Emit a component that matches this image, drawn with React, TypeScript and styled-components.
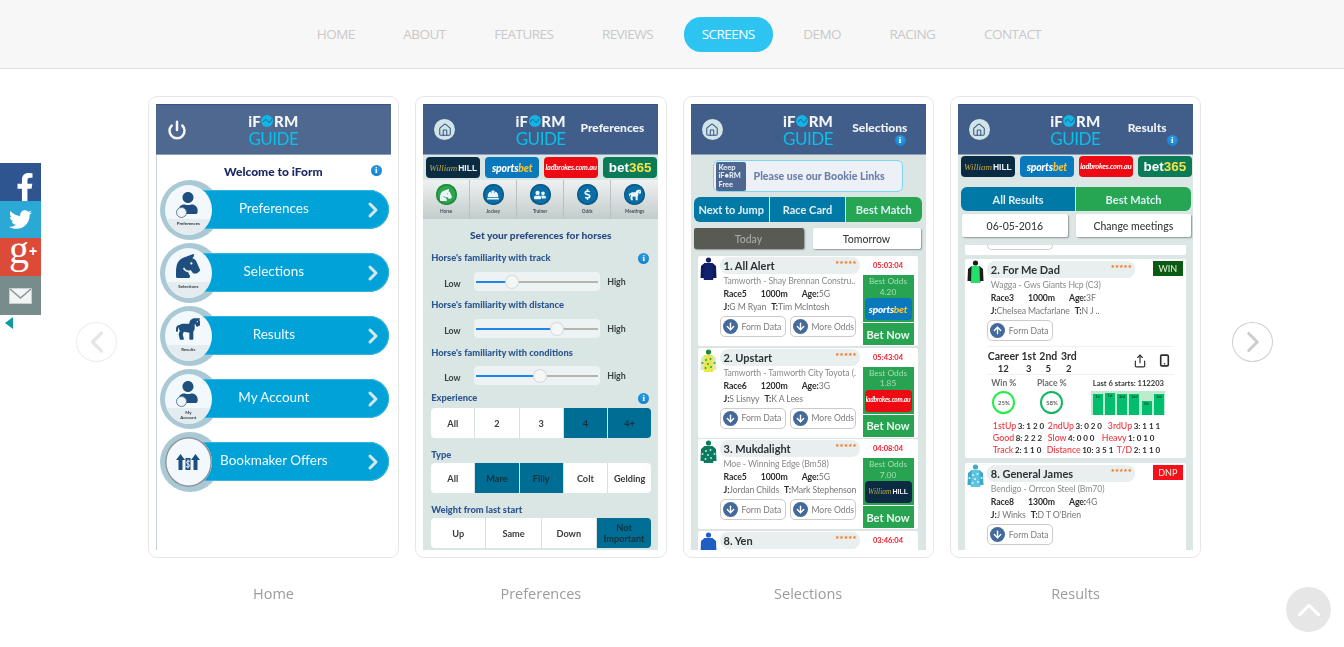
import React from 'react';
import styled, { createGlobalStyle } from 'styled-components';
import { ArrowDown, ArrowUp, ChevronLeft, ChevronRight, ChevronUp, House, Power, Share, Smartphone } from 'lucide-react';
import { FaDollarSign, FaFacebookF, FaHardHat, FaHorse, FaHorseHead, FaTwitter, FaUser, FaUserFriends } from 'react-icons/fa';

const GlobalStyle = createGlobalStyle`
  * { box-sizing: border-box; }
  html, body { margin: 0; padding: 0; background: #fff; overflow: hidden; }
  body { font-family: "Open Sans", "Liberation Sans", sans-serif; }
`;

const Page = styled.div`
  width: 1344px;
  height: 647px;
  overflow: hidden;
`;

/* top navigation */
const NavBar = styled.nav`
  height: 69px;
  background: #f7f7f7;
  border-bottom: 1px solid #e0e0e0;
  display: flex;
  justify-content: center;
  align-items: center;
  gap: 12.6px;
  padding: 1px 0 0 14px;
`;
const NavLink = styled.a<{ $active?: boolean }>`
  height: 35px;
  padding: 0 18px 1px;
  display: flex;
  align-items: center;
  border-radius: 17px;
  font-size: 13.5px;
  letter-spacing: -0.55px;
  color: ${p => (p.$active ? '#fff' : '#c9c9c9')};
  background: ${p => (p.$active ? '#2dc4f2' : 'transparent')};
`;

/* floating side rail */
const Rail = styled.aside`
  position: fixed;
  left: 0;
  top: 163px;
  width: 41px;
  display: flex;
  flex-direction: column;
`;
const RailItem = styled.div<{ $bg: string; $h: number }>`
  height: ${p => p.$h}px;
  background: ${p => p.$bg};
  color: #fff;
  display: flex;
  align-items: center;
  justify-content: center;
`;
const GooglePlus = styled.span`
  font-family: "Liberation Serif", serif;
  color: #fff;
  font-size: 40px;
  line-height: 30px;
  margin-top: -13px;
  margin-left: 5px;
  & small { font-family: "Liberation Sans", sans-serif; font-size: 14px; font-weight: 700; vertical-align: 7px; }
`;
const RailToggle = styled.div`
  margin: 2px 0 0 5px;
  width: 0;
  height: 0;
  border-top: 6px solid transparent;
  border-bottom: 6px solid transparent;
  border-right: 8px solid #0b9c9c;
`;

/* carousel */
const Stage = styled.main`
  position: relative;
  display: flex;
  justify-content: center;
  padding: 27px 0 0 5px;
`;
const Slide = styled.figure`
  flex: 0 0 267.33px;
  margin: 0;
  padding: 0 8px;
`;
const Frame = styled.div`
  height: 462px;
  border: 1px solid #e6e6e6;
  border-radius: 9px;
  padding: 7px;
  background: #fff;
`;
const Caption = styled.figcaption`
  margin-top: 25px;
  text-align: center;
  font-size: 14.5px;
  line-height: 22px;
  color: #9c9c9c;
`;
const ArrowButton = styled.button<{ $side: 'left' | 'right'; $faint?: boolean }>`
  position: absolute;
  top: 253px;
  ${p => (p.$side === 'left' ? 'left: 76px;' : 'right: 71px;')}
  width: 41px;
  height: 40px;
  border-radius: 50%;
  background: #fff;
  padding: 0;
  border: 1px solid ${p => (p.$faint ? '#ececec' : '#cfcfcf')};
  color: ${p => (p.$faint ? '#e6e6e6' : '#cdcdcd')};
  display: flex;
  align-items: center;
  justify-content: center;
`;
const TopButton = styled.button`
  position: fixed;
  left: 1286px;
  top: 587px;
  width: 45px;
  height: 45px;
  border: 0;
  border-radius: 50%;
  background: #e6e6e6;
  color: #fff;
  display: flex;
  align-items: center;
  justify-content: center;
  padding: 0;
`;

/* phone screens */
const Screen = styled.div<{ $bg: string; $rule?: boolean }>`
  width: 235px;
  height: 446px;
  overflow: hidden;
  display: flex;
  flex-direction: column;
  background: ${p => p.$bg};
  font-family: Lato, "Liberation Sans", sans-serif;
  filter: blur(0.3px);
  ${p => p.$rule && 'box-shadow: inset 1px 0 0 #c9d2d6;'}
`;
const Header = styled.header<{ $light?: boolean }>`
  flex: 0 0 51px;
  display: grid;
  grid-template-columns: 1fr auto 1fr;
  background: ${p => (p.$light ? '#4f6890' : '#415d89')};
  border-top: 1px solid #3a5480;
  border-bottom: 1px solid #8ea0b8;
  color: #fff;
`;
const HeaderLeft = styled.div`
  display: flex;
  align-items: center;
  padding-left: 11px;
`;
const HomeBadge = styled.span`
  width: 21px;
  height: 21px;
  border-radius: 50%;
  background: #d3e4e6;
  color: #35558a;
  display: flex;
  align-items: center;
  justify-content: center;
`;
const Logo = styled.div`
  width: 52px;
  display: flex;
  flex-direction: column;
  align-items: center;
  padding-top: 8px;
`;
const LogoTop = styled.div`
  display: flex;
  align-items: center;
  font-weight: 900;
  font-size: 15px;
  line-height: 16px;
  letter-spacing: 0.2px;
  color: #f2f6f8;
`;
const LogoDot = styled.span`
  width: 12px;
  height: 12px;
  border-radius: 50%;
  background: #14b5e4;
  margin: 0 0.5px;
  display: inline-flex;
  align-items: center;
  justify-content: center;
`;
const LogoBottom = styled.div`
  font-weight: 400;
  font-size: 17px;
  line-height: 20px;
  color: #08c0ea;
  letter-spacing: -0.5px;
`;
const HeaderTitle = styled.div`
  display: flex;
  flex-direction: column;
  align-items: center;
  padding-top: 15px;
  font-size: 12px;
  line-height: 15px;
  font-weight: 900;
  color: #eef2f6;
`;
const TitleInfo = styled.div<{ $pull: number }>`
  align-self: flex-end;
  margin: 0 ${p => p.$pull}px 0 0;
  line-height: 0;
`;
const InfoDot = styled.span`
  display: inline-flex;
  align-items: center;
  justify-content: center;
  width: 11px;
  height: 11px;
  border-radius: 50%;
  background: radial-gradient(circle at 50% 35%, #2ea0e6, #0f78c2);
  color: #fff;
  font-family: "Liberation Serif", serif;
  font-weight: 700;
  font-size: 9px;
  line-height: 11px;
`;

/* home screen */
const WelcomeRow = styled.div`
  position: relative;
  height: 24px;
  margin: 4px 0 -5px;
  flex: none;
  display: flex;
  align-items: center;
  justify-content: center;
  font-weight: 900;
  font-size: 12px;
  color: #1b2b63;
`;
const WelcomeInfo = styled.span`
  position: absolute;
  right: 9px;
  top: 6px;
  line-height: 0;
`;
const MenuRow = styled.div`
  flex: none;
  height: 63px;
  display: flex;
  align-items: center;
  padding-left: 4px;
`;
const Ring = styled.div`
  flex: none;
  width: 60px;
  height: 60px;
  border-radius: 50%;
  background: #a9c9d5;
  display: flex;
  align-items: center;
  padding-left: 5px;
`;
const Face = styled.div<{ $plain?: boolean }>`
  position: relative;
  z-index: 2;
  width: 47px;
  height: 50px;
  border-radius: 50%;
  background: #f2f8fb;
  overflow: hidden;
  display: flex;
  flex-direction: column;
  ${p => p.$plain && 'box-shadow: inset 0 0 0 1.5px #8a9498;'}
`;
const FaceArt = styled.div<{ $full?: boolean }>`
  flex: 1;
  position: relative;
  display: flex;
  align-items: center;
  justify-content: center;
  color: #1f4f7f;
  padding-top: ${p => (p.$full ? 0 : 3)}px;
`;
const FaceLabel = styled.div`
  flex: 0 0 16px;
  background: #e5ecef;
  text-align: center;
  font-size: 4.4px;
  line-height: 5px;
  font-weight: 700;
  color: #2c3a44;
  padding-top: 2px;
`;
const SmallBadge = styled.span`
  position: absolute;
  left: 11px;
  bottom: 1px;
  width: 11px;
  height: 11px;
  border: 1px solid #5d7f99;
  border-radius: 50%;
  background: #eef6f8;
`;
const Pill = styled.div`
  position: relative;
  z-index: 1;
  margin-left: -20px;
  flex: 0 0 189px;
  height: 39px;
  background: #00a2d8;
  border-radius: 0 20px 20px 0;
  box-shadow: inset 0 0 0 1px #35b4de;
  display: flex;
  align-items: center;
  color: #f2fbff;
  font-size: 13.5px;
`;
const PillLabel = styled.span`
  width: 148px;
  text-align: center;
  padding-bottom: 3px;
`;
const PillChevron = styled.span`
  margin-left: 13px;
  line-height: 0;
  color: #d6e7ee;
`;

/* bookmaker strip */
const BrandStrip = styled.div<{ $top?: number }>`
  flex: 0 0 25px;
  display: grid;
  grid-template-columns: repeat(4, 54px);
  gap: 5px;
  padding: ${p => p.$top ?? 2}px 3px 0;
  height: 25px;
`;
const Chip = styled.div<{ $bg: string; $h?: number }>`
  height: ${p => p.$h ?? 21}px;
  border-radius: 4px;
  background: ${p => p.$bg};
  display: flex;
  align-items: center;
  justify-content: center;
  white-space: nowrap;
  color: #fff;
`;
const Script = styled.span<{ $s: number }>`
  font-family: "Liberation Serif", serif;
  font-style: italic;
  font-size: ${p => p.$s}px;
  color: #c2a94e;
`;
const Hill = styled.span<{ $s: number }>`
  font-family: "Liberation Sans", sans-serif;
  font-weight: 700;
  font-size: ${p => p.$s}px;
  color: #eef2f4;
  margin-left: 1px;
`;
const Sports = styled.span<{ $s: number }>`
  font-weight: 900;
  font-style: italic;
  font-size: ${p => p.$s}px;
  letter-spacing: -0.2px;
  & b { color: #f7c331; font-weight: 900; }
`;
const Lad = styled.span<{ $s: number }>`
  font-style: italic;
  font-weight: 700;
  font-size: ${p => p.$s}px;
  letter-spacing: -0.2px;
`;
const Bet365 = styled.span`
  font-family: "Liberation Sans", sans-serif;
  font-weight: 700;
  font-size: 13.5px;
  & b { color: #f6e34b; }
`;

function Brand({ kind, small }: { kind: string; small?: boolean }) {
  const h = small ? 22 : 21;
  if (kind === 'hill') return <Chip $bg="#0b2b42" $h={h}><Script $s={small ? 7.5 : 9}>William</Script><Hill $s={small ? 7 : 8.5}>HILL</Hill></Chip>;
  if (kind === 'sports') return <Chip $bg="#0a78bd" $h={h}><Sports $s={small ? 10 : 10.5}>sports<b>bet</b></Sports></Chip>;
  if (kind === 'lad') return <Chip $bg="#ee0a12" $h={h}><Lad $s={small ? 6.5 : 7.4}>ladbrokes.com.au</Lad></Chip>;
  return <Chip $bg="#0b7a57" $h={h}><Bet365>bet<b>365</b></Bet365></Chip>;
}
const AllBrands = ({ top }: { top?: number }) => (
  <BrandStrip $top={top}>
    <Brand kind="hill" />
    <Brand kind="sports" />
    <Brand kind="lad" />
    <Brand kind="bet" />
  </BrandStrip>
);

/* preferences */
const IconTabs = styled.div`
  flex: 0 0 39px;
  display: grid;
  grid-template-columns: repeat(5, 1fr);
  background: linear-gradient(#eef1f1, #c3cccc);
`;
const IconTab = styled.div`
  display: flex;
  flex-direction: column;
  align-items: center;
  padding-top: 4px;
  border-right: 1px solid #b8c2c2;
  font-size: 4.6px;
  line-height: 6px;
  font-weight: 700;
  color: #45515a;
  &:last-child { border-right: 0; }
`;
const TabDisc = styled.span<{ $green?: boolean }>`
  width: 21px;
  height: 21px;
  border-radius: 50%;
  background: ${p => (p.$green ? '#2ea44f' : '#0b6da6')};
  box-shadow: inset 0 0 0 1.5px ${p => (p.$green ? '#1d8a3c' : '#0a5a8a')};
  color: #eaf6fa;
  display: flex;
  align-items: center;
  justify-content: center;
  margin-bottom: 3px;
`;
const Pane = styled.div`
  flex: 1;
  padding: 0 8px;
  position: relative;
`;
const PaneTitle = styled.div`
  height: 18px;
  margin: 7px 0 1px;
  line-height: 18px;
  text-align: center;
  font-weight: 900;
  font-size: 10.2px;
  color: #2b4a80;
`;
const FieldLabel = styled.div<{ $mt: number }>`
  height: 14px;
  line-height: 14px;
  margin-top: ${p => p.$mt}px;
  font-weight: 900;
  font-size: 9.3px;
  color: #2d5690;
  display: flex;
  justify-content: space-between;
  align-items: center;
  padding-right: 1px;
  & > span { line-height: 0; }
`;
const SliderRow = styled.div<{ $mt: number }>`
  margin-top: ${p => p.$mt}px;
  height: 19px;
  display: grid;
  grid-template-columns: 43px 126px auto;
  align-items: center;
  font-weight: 700;
  font-size: 8.8px;
  color: #3a3f42;
`;
const SliderLow = styled.span`
  padding-left: 13px;
  padding-top: 3px;
`;
const SliderHigh = styled.span`
  padding-left: 7px;
`;
const SliderBox = styled.div`
  position: relative;
  height: 19px;
  background: #edf2f4;
  border-radius: 4px;
`;
const SliderLine = styled.div`
  position: absolute;
  left: 2px;
  right: 2px;
  top: 9px;
  height: 1.5px;
  background: #b7b4ae;
`;
const SliderFill = styled.div`
  position: absolute;
  left: 0;
  top: 0;
  height: 100%;
  background: #1e86ea;
`;
const SliderThumb = styled.div`
  position: absolute;
  top: 4px;
  width: 12px;
  height: 12px;
  margin-left: -6px;
  border-radius: 50%;
  background: #f5f7f7;
  box-shadow: 0 0 0 1px #d5dbdb;
`;
const Segments = styled.div<{ $n: number; $mt: number }>`
  margin-top: ${p => p.$mt}px;
  height: 30px;
  width: 220px;
  display: grid;
  grid-template-columns: repeat(${p => p.$n}, 1fr);
  gap: 1px;
  border-radius: 4px;
  overflow: hidden;
  background: #d6e2e2;
`;
const Segment = styled.div<{ $on?: boolean }>`
  display: flex;
  align-items: center;
  justify-content: center;
  text-align: center;
  background: ${p => (p.$on ? '#006d95' : '#fff')};
  color: ${p => (p.$on ? '#17303a' : '#3b3b3b')};
  font-weight: 700;
  font-size: 9.2px;
  line-height: 11px;
`;

/* selections & results */
const Banner = styled.div`
  margin: 5px 0 0 22px;
  width: 190px;
  height: 32px;
  flex: none;
  border: 1px solid #7fd6ef;
  border-radius: 6px;
  background: #eef0f8;
  display: flex;
  align-items: center;
  padding-left: 2px;
  gap: 8px;
  font-weight: 900;
  font-size: 10.6px;
  color: #6c80a8;
  white-space: nowrap;
`;
const KeepBox = styled.div`
  width: 30px;
  height: 29px;
  background: #4e6790;
  border-radius: 2px;
  color: #e4ecf4;
  font-size: 7.4px;
  line-height: 8.5px;
  font-weight: 900;
  padding: 2px 0 0 3px;
`;
const TabBar = styled.div<{ $n: number; $mt: number; $w: number; $ml: number; $h: number }>`
  flex: none;
  margin: ${p => p.$mt}px 0 0 ${p => p.$ml}px;
  width: ${p => p.$w}px;
  height: ${p => p.$h}px;
  border-radius: 6px;
  overflow: hidden;
  display: grid;
  grid-template-columns: repeat(${p => p.$n}, 1fr);
  gap: 1px;
  background: #dbe6e4;
`;
const TabCell = styled.div<{ $green?: boolean }>`
  display: flex;
  align-items: center;
  justify-content: center;
  font-size: 11px;
  font-weight: 700;
  color: #dff0f6;
  background: ${p => (p.$green ? '#26a553' : '#0079a6')};
`;
const DayRow = styled.div<{ $cols: string; $gap: number; $mt: number; $ml: number; $h: number }>`
  flex: none;
  margin: ${p => p.$mt}px 0 0 ${p => p.$ml}px;
  height: ${p => p.$h}px;
  display: grid;
  grid-template-columns: ${p => p.$cols};
  gap: ${p => p.$gap}px;
`;
const DayBtn = styled.div<{ $dark?: boolean }>`
  display: flex;
  align-items: center;
  justify-content: center;
  font-size: 10.5px;
  font-weight: 500;
  background: ${p => (p.$dark ? '#5a5a54' : '#fff')};
  color: ${p => (p.$dark ? '#a8aba8' : '#3a3a3a')};
  border-radius: 2px;
  box-shadow: 1px 1px 1.5px #8e9696;
`;
const RaceCard = styled.article<{ $h: number; $mt: number; $ml: number; $w: number }>`
  flex: none;
  margin: ${p => p.$mt}px 0 0 ${p => p.$ml}px;
  width: ${p => p.$w}px;
  height: ${p => p.$h}px;
  background: #fff;
  border-radius: 2px;
  overflow: hidden;
`;
const RaceTop = styled.div`
  display: flex;
`;
const SilkCol = styled.div`
  flex: 0 0 22px;
  padding: 1px 0 0 2px;
  line-height: 0;
`;
const RaceMain = styled.div<{ $w: number; $top?: number }>`
  flex: 0 0 ${p => p.$w}px;
  padding-top: ${p => p.$top ?? 1}px;
  min-width: 0;
`;
const NamePill = styled.div`
  height: 17px;
  background: #e9eeee;
  border-radius: 8px;
  display: flex;
  justify-content: space-between;
  padding: 0 3px 0 4px;
  font-weight: 700;
  font-size: 11px;
  line-height: 18px;
  color: #2c3136;
  white-space: nowrap;
`;
const Stars = styled.span`
  font-family: "DejaVu Sans", sans-serif;
  font-size: 5px;
  line-height: 11px;
  color: #f47a1c;
  letter-spacing: -0.2px;
`;
const Line = styled.div<{ $dim?: boolean; $gap?: number }>`
  height: 13px;
  padding-left: 4px;
  display: flex;
  gap: ${p => p.$gap ?? 5}px;
  font-size: 8.7px;
  letter-spacing: -0.1px;
  line-height: 13px;
  color: ${p => (p.$dim ? '#8a8a8a' : '#777')};
  white-space: nowrap;
  & b { color: #2c2c2c; font-weight: 700; }
`;
const ActionRow = styled.div`
  margin-top: 3px;
  display: flex;
  gap: 4px;
`;
const ActionBtn = styled.div`
  width: 66px;
  height: 21px;
  border: 1px solid #cfcac5;
  border-radius: 5px;
  background: #fff;
  display: flex;
  align-items: center;
  gap: 4px;
  padding-left: 2px;
  font-size: 8.6px;
  color: #7c7c7c;
  white-space: nowrap;
`;
const ArrowDisc = styled.span`
  flex: none;
  width: 15px;
  height: 15px;
  border-radius: 50%;
  background: #446a9c;
  color: #fff;
  display: flex;
  align-items: center;
  justify-content: center;
`;
const RaceSide = styled.div`
  flex: 0 0 51px;
  margin-left: 3px;
`;
const Clock = styled.div`
  height: 19px;
  line-height: 19px;
  text-align: center;
  font-size: 7.5px;
  font-weight: 700;
  color: #f01d2a;
`;
const OddsBox = styled.div`
  height: 47px;
  background: #28a352;
  padding: 0 2px;
  text-align: center;
  font-size: 8.4px;
  line-height: 10.5px;
  color: #a9dcb9;
  & > div:first-child { height: 23px; padding-top: 1px; }
`;
const BetNow = styled.div`
  margin-top: 1px;
  height: 22px;
  background: #28a352;
  color: #eaf8ee;
  font-size: 11px;
  font-weight: 700;
  display: flex;
  align-items: center;
  justify-content: center;
`;
const ClippedCard = styled.div`
  flex: none;
  margin: 8px 0 0 7px;
  width: 221px;
  height: 10px;
  background: #fff;
  border-radius: 0 0 2px 2px;
  padding-left: 22px;
`;
const ClippedBtn = styled.div`
  width: 66px;
  height: 5px;
  border: 1px solid #cfcac5;
  border-top: 0;
  border-radius: 0 0 5px 5px;
`;
const StatusBadge = styled.div<{ $bg: string }>`
  margin: 2px 0 0 18px;
  width: 30px;
  height: 15px;
  background: ${p => p.$bg};
  color: #dcead8;
  font-size: 9px;
  font-weight: 500;
  display: flex;
  align-items: center;
  justify-content: center;
`;
const CareerRow = styled.div`
  margin: 5px 12px 0 22px;
  height: 29px;
  border-top: 1px solid #eff2f2;
  border-bottom: 1px solid #eff2f2;
  display: flex;
  justify-content: space-between;
  align-items: flex-start;
  padding-top: 3px;
`;
const CareerGrid = styled.div`
  display: grid;
  grid-template-columns: 33px 18px 21px 20px;
  text-align: center;
  font-size: 10.5px;
  line-height: 12.5px;
  font-weight: 700;
  color: #2e2e2e;
  white-space: nowrap;
  & b { font-weight: 700; font-size: 9.5px; }
`;
const CareerIcons = styled.div`
  display: flex;
  gap: 11px;
  padding: 4px 0 0 0;
  color: #2c2c2c;
  margin-right: 3px;
`;
const StatGrid = styled.div`
  margin: 3px 0 0 15px;
  display: grid;
  grid-template-columns: 48px 48px 74px;
  font-size: 8.6px;
  line-height: 11px;
  font-weight: 700;
  color: #6d6d6d;
`;
const StatCol = styled.div<{ $push?: number }>`
  display: flex;
  flex-direction: column;
  align-items: center;
  margin-left: ${p => p.$push ?? 0}px;
  white-space: nowrap;
`;
const LastSix = styled.span`
  font-size: 7.6px;
  color: #3a3a3a;
`;
const Gauge = styled.div<{ $c: string }>`
  margin-top: 2px;
  width: 23px;
  height: 23px;
  border-radius: 50%;
  border: 2px solid ${p => p.$c};
  display: flex;
  align-items: center;
  justify-content: center;
  font-size: 6px;
  font-weight: 500;
  color: #444;
`;
const BarBox = styled.div`
  margin-top: 2px;
  width: 74px;
  height: 24px;
  background: #bdeccd;
  display: flex;
  align-items: flex-end;
  justify-content: center;
  gap: 2.2px;
`;
const FormBar = styled.div`
  width: 10px;
  background: #00be6e;
  font-size: 3.4px;
  line-height: 6px;
  text-align: center;
  color: #0a4a2a;
`;
const Records = styled.div`
  margin: 5px 0 0 28px;
`;
const RecordLine = styled.div<{ $cols: string }>`
  display: grid;
  grid-template-columns: ${p => p.$cols};
  height: 12px;
  line-height: 12px;
  font-size: 8px;
  white-space: nowrap;
  color: #2e2e2e;
  font-weight: 700;
  & i { color: #f0343f; font-style: normal; font-weight: 500; font-size: 8.8px; margin-right: 1.5px; }
`;

/* small drawings */
function Silk({ body, sleeve, cap, dots }: { body: string; sleeve: string; cap: string; dots?: string }) {
  return (
    <svg width="17" height="24" viewBox="0 0 17 24">
      <circle cx="8.5" cy="3" r="2.6" fill={cap} />
      <path d="M4.5 6 L12.5 6 L16 9 L16.5 21 L13.5 21 L13 23 L4 23 L3.5 21 L.5 21 L1 9 Z" fill={sleeve} />
      <path d="M4.5 6 L12.5 6 L13 23 L4 23 Z" fill={body} />
      {dots && (
        <g fill={dots}>
          <circle cx="6" cy="11" r="1" /><circle cx="10.5" cy="10" r="1" /><circle cx="8" cy="15" r="1" />
          <circle cx="5.5" cy="19" r="1" /><circle cx="11" cy="18" r="1" /><circle cx="2.5" cy="14" r="1" /><circle cx="14.5" cy="14" r="1" />
        </g>
      )}
    </svg>
  );
}
const OffersIcon = () => (
  <svg width="24" height="18" viewBox="0 0 24 18" fill="currentColor">
    <path d="M4.5 1 L9 7 H6.5 V17 H2.5 V7 H0 Z" />
    <path d="M19.5 1 L24 7 H21.5 V17 H17.5 V7 H15 Z" />
    <path d="M9.5 5 H14.5 V17 H9.5 Z" />
    <path d="M12 6.5 V15.5 M14 8.5 C13 7.5 10.6 7.5 10.6 9.4 C10.6 11.4 13.6 10.6 13.6 12.6 C13.6 14.4 11 14.4 10 13.4" fill="none" stroke="#f2f8fb" strokeWidth="1" />
  </svg>
);
const LogoMark = () => (
  <LogoDot>
    <svg width="9" height="6" viewBox="0 0 9 6"><path d="M0 4 C2 1 3 1 4.5 3 S7 5 9 1" fill="none" stroke="#0d5f80" strokeWidth="1" /></svg>
  </LogoDot>
);
const BrandLogo = () => (
  <Logo>
    <LogoTop>iF<LogoMark />RM</LogoTop>
    <LogoBottom>GUIDE</LogoBottom>
  </Logo>
);
const HomeButton = () => (
  <HeaderLeft><HomeBadge><House size={14} strokeWidth={1.8} /></HomeBadge></HeaderLeft>
);
const Info = () => <InfoDot>i</InfoDot>;

/* data */
const menu = [
  { title: 'Preferences', face: 'Preferences', art: <FaUser size={22} />, badge: true },
  { title: 'Selections', face: 'Selections', art: <FaHorseHead size={24} />, badge: false },
  { title: 'Results', face: 'Results', art: <FaHorse size={24} />, badge: false },
  { title: 'My Account', face: 'My\nAccount', art: <FaUser size={22} />, badge: true },
];
const sliders = [
  { label: "Horse's familiarity with track", mt: 7, sm: 7, v: 30, info: true },
  { label: "Horse's familiarity with distance", mt: 7, sm: 7, v: 66, info: false },
  { label: "Horse's familiarity with conditions", mt: 8, sm: 6, v: 52, info: false },
];

function Slider({ v, mt }: { v: number; mt: number }) {
  return (
    <SliderRow $mt={mt}>
      <SliderLow>Low</SliderLow>
      <SliderBox>
        <SliderLine><SliderFill style={{ width: `${v}%` }} /></SliderLine>
        <SliderThumb style={{ left: `${v}%` }} />
      </SliderBox>
      <SliderHigh>High</SliderHigh>
    </SliderRow>
  );
}
function Choices({ items, on, mt }: { items: string[]; on: string[]; mt: number }) {
  return (
    <Segments $n={items.length} $mt={mt}>
      {items.map(i => <Segment key={i} $on={on.includes(i)}>{i}</Segment>)}
    </Segments>
  );
}
function Action({ label, up }: { label: string; up?: boolean }) {
  return (
    <ActionBtn>
      <ArrowDisc>{up ? <ArrowUp size={11} strokeWidth={3} /> : <ArrowDown size={11} strokeWidth={3} />}</ArrowDisc>
      {label}
    </ActionBtn>
  );
}

const races = [
  { name: '1. All Alert', time: '05:03:04', sub: 'Tamworth - Shay Brennan Constru..', race: 'Race5', dist: '1000m', age: '5G', j: 'G M Ryan', t: 'Tim McIntosh', odds: '4.20', brand: 'sports', silk: { body: '#12206e', sleeve: '#0d1a5c', cap: '#12206e' } },
  { name: '2. Upstart', time: '05:43:04', sub: 'Tamworth - Tamworth City Toyota (.', race: 'Race6', dist: '1200m', age: '3G', j: 'S Lisnyy', t: 'K A Lees', odds: '1.85', brand: 'lad', silk: { body: '#e8e84a', sleeve: '#dfe6c0', cap: '#1f8a3a', dots: '#2da14a' } },
  { name: '3. Mukdalight', time: '04:08:04', sub: 'Moe - Winning Edge (Bm58)', race: 'Race5', dist: '1000m', age: '5G', j: 'Jordan Childs', t: 'Mark Stephenson', odds: '7.00', brand: 'hill', silk: { body: '#0c7a5e', sleeve: '#0c7a5e', cap: '#0c7a5e', dots: '#bfe8d8' } },
  { name: '8. Yen', time: '03:46:04', sub: '', race: '', dist: '', age: '', j: '', t: '', odds: '', brand: '', silk: { body: '#1f5fc4', sleeve: '#1f5fc4', cap: '#1f5fc4' } },
];

function SelectionCard({ r, first }: { r: (typeof races)[number]; first: boolean }) {
  return (
    <RaceCard $h={90} $mt={first ? 7 : 1.7} $ml={7} $w={220}>
      <RaceTop>
        <SilkCol><Silk {...r.silk} /></SilkCol>
        <RaceMain $w={140}>
          <NamePill>{r.name}<Stars>★★★★★</Stars></NamePill>
          {r.sub && (
            <>
              <Line $dim>{r.sub}</Line>
              <Line $gap={14}><b>{r.race}</b><b>{r.dist}</b><span><b>Age:</b>{r.age}</span></Line>
              <Line><span><b>J:</b>{r.j}</span><span><b>T:</b>{r.t}</span></Line>
              <ActionRow><Action label="Form Data" /><Action label="More Odds" /></ActionRow>
            </>
          )}
        </RaceMain>
        <RaceSide>
          <Clock>{r.time}</Clock>
          {r.odds && (
            <>
              <OddsBox>
                <div>Best Odds<br />{r.odds}</div>
                <Brand kind={r.brand} small />
              </OddsBox>
              <BetNow>Bet Now</BetNow>
            </>
          )}
        </RaceSide>
      </RaceTop>
    </RaceCard>
  );
}

const bars = [{ l: '1st', h: 21 }, { l: '1st', h: 22 }, { l: '2nd', h: 21 }, { l: '2nd', h: 21 }, { l: '5th', h: 14 }, { l: '3rd', h: 21 }];

function HomeScreen() {
  return (
    <Screen $bg="#fff" $rule>
      <Header $light>
        <HeaderLeft><Power size={20} strokeWidth={3} color="#f4f6f8" /></HeaderLeft>
        <BrandLogo />
        <div />
      </Header>
      <WelcomeRow>Welcome to iForm<WelcomeInfo><Info /></WelcomeInfo></WelcomeRow>
      {menu.map(m => (
        <MenuRow key={m.title}>
          <Ring>
            <Face>
              <FaceArt>{m.art}{m.badge && <SmallBadge />}</FaceArt>
              <FaceLabel>{m.face.split('\n').map(s => <div key={s}>{s}</div>)}</FaceLabel>
            </Face>
          </Ring>
          <Pill>
            <PillLabel>{m.title}</PillLabel>
            <PillChevron><ChevronRight size={24} strokeWidth={3} /></PillChevron>
          </Pill>
        </MenuRow>
      ))}
      <MenuRow>
        <Ring>
          <Face $plain>
            <FaceArt $full><OffersIcon /></FaceArt>
          </Face>
        </Ring>
        <Pill>
          <PillLabel>Bookmaker Offers</PillLabel>
          <PillChevron><ChevronRight size={24} strokeWidth={3} /></PillChevron>
        </Pill>
      </MenuRow>
    </Screen>
  );
}

function PreferencesScreen() {
  return (
    <Screen $bg="#d9e6e4">
      <Header>
        <HomeButton />
        <BrandLogo />
        <HeaderTitle>Preferences</HeaderTitle>
      </Header>
      <AllBrands />
      <IconTabs>
        <IconTab><TabDisc $green><FaHorseHead size={12} /></TabDisc>Horse</IconTab>
        <IconTab><TabDisc><FaHardHat size={12} /></TabDisc>Jockey</IconTab>
        <IconTab><TabDisc><FaUserFriends size={12} /></TabDisc>Trainer</IconTab>
        <IconTab><TabDisc><FaDollarSign size={11} /></TabDisc>Odds</IconTab>
        <IconTab><TabDisc><FaHorse size={12} /></TabDisc>Meetings</IconTab>
      </IconTabs>
      <Pane>
        <PaneTitle>Set your preferences for horses</PaneTitle>
        {sliders.map(s => (
          <React.Fragment key={s.label}>
            <FieldLabel $mt={s.mt}>{s.label}{s.info && <span><Info /></span>}</FieldLabel>
            <Slider v={s.v} mt={s.sm} />
          </React.Fragment>
        ))}
        <FieldLabel $mt={6}>Experience<span><Info /></span></FieldLabel>
        <Choices mt={3} items={['All', '2', '3', '4', '4+']} on={['4', '4+']} />
        <FieldLabel $mt={10}>Type</FieldLabel>
        <Choices mt={1} items={['All', 'Mare', 'Filly', 'Colt', 'Gelding']} on={['Mare', 'Filly']} />
        <FieldLabel $mt={10}>Weight from last start</FieldLabel>
        <Choices mt={1} items={['Up', 'Same', 'Down', 'Not Important']} on={['Not Important']} />
      </Pane>
    </Screen>
  );
}

function SelectionsScreen() {
  return (
    <Screen $bg="#dbe6e4">
      <Header>
        <HomeButton />
        <BrandLogo />
        <HeaderTitle>Selections<TitleInfo $pull={20}><Info /></TitleInfo></HeaderTitle>
      </Header>
      <Banner>
        <KeepBox>Keep<br />iF●RM<br />Free</KeepBox>
        Please use our Bookie Links
      </Banner>
      <TabBar $n={3} $mt={5} $ml={3} $w={228} $h={25}>
        <TabCell>Next to Jump</TabCell>
        <TabCell>Race Card</TabCell>
        <TabCell $green>Best Match</TabCell>
      </TabBar>
      <DayRow $cols="110px 108px" $gap={9} $mt={6} $ml={3} $h={21}>
        <DayBtn $dark>Today</DayBtn>
        <DayBtn>Tomorrow</DayBtn>
      </DayRow>
      {races.map((r, i) => <SelectionCard key={r.name} r={r} first={i === 0} />)}
    </Screen>
  );
}

function ResultsScreen() {
  return (
    <Screen $bg="#dce6e4">
      <Header>
        <HomeButton />
        <BrandLogo />
        <HeaderTitle>Results<TitleInfo $pull={15}><Info /></TitleInfo></HeaderTitle>
      </Header>
      <AllBrands top={1} />
      <TabBar $n={2} $mt={7} $ml={3} $w={230} $h={24}>
        <TabCell>All Results</TabCell>
        <TabCell $green>Best Match</TabCell>
      </TabBar>
      <DayRow $cols="106px 115px" $gap={8} $mt={3} $ml={4} $h={23}>
        <DayBtn>06-05-2016</DayBtn>
        <DayBtn>Change meetings</DayBtn>
      </DayRow>
      <ClippedCard><ClippedBtn /></ClippedCard>
      <RaceCard $h={199} $mt={4} $ml={7} $w={221}>
        <RaceTop>
          <SilkCol><Silk body="#22e06a" sleeve="#1d1d1d" cap="#1d1d1d" /></SilkCol>
          <RaceMain $w={148} $top={2}>
            <NamePill>2. For Me Dad<Stars>★★★★★</Stars></NamePill>
            <Line $dim>Wagga - Gws Giants Hcp (C3)</Line>
            <Line $gap={14}><b>Race3</b><b>1000m</b><span><b>Age:</b>3F</span></Line>
            <Line><span><b>J:</b>Chelsea Macfarlane</span><span><b>T:</b>N J ..</span></Line>
            <ActionRow><Action label="Form Data" up /></ActionRow>
          </RaceMain>
          <StatusBadge $bg="#0a5a12">WIN</StatusBadge>
        </RaceTop>
        <CareerRow>
          <CareerGrid>
            <span>Career</span><span>1st</span><span>2nd</span><span>3rd</span>
            <b>12</b><b>3</b><b>5</b><b>2</b>
          </CareerGrid>
          <CareerIcons><Share size={14} /><Smartphone size={13} strokeWidth={3} /></CareerIcons>
        </CareerRow>
        <StatGrid>
          <StatCol>Win %<Gauge $c="#24ee48">25%</Gauge></StatCol>
          <StatCol>Place %<Gauge $c="#12b765">58%</Gauge></StatCol>
          <StatCol $push={31}>
            <LastSix>Last 6 starts: 112203</LastSix>
            <BarBox>
              {bars.map((b, i) => <FormBar key={i} style={{ height: b.h }}>{b.l}</FormBar>)}
            </BarBox>
          </StatCol>
        </StatGrid>
        <Records>
          <RecordLine $cols="55px 60px auto"><span><i>1stUp</i>3: 1 2 0</span><span><i>2ndUp</i>3: 0 2 0</span><span><i>3rdUp</i>3: 1 1 1</span></RecordLine>
          <RecordLine $cols="55px 54px auto"><span><i>Good</i>8: 2 2 2</span><span><i>Slow</i>4: 0 0 0</span><span><i>Heavy</i>1: 0 1 0</span></RecordLine>
          <RecordLine $cols="54px 70px auto"><span><i>Track</i>2: 1 1 0</span><span><i>Distance</i>10: 3 5 1</span><span><i>T/D</i>2: 1 1 0</span></RecordLine>
        </Records>
      </RaceCard>
      <RaceCard $h={90} $mt={5} $ml={7} $w={221}>
        <RaceTop>
          <SilkCol><Silk body="#5cc4e0" sleeve="#3fa8c8" cap="#3fa8c8" dots="#e6f2f4" /></SilkCol>
          <RaceMain $w={148} $top={2}>
            <NamePill>8. General James<Stars>★★★★★</Stars></NamePill>
            <Line $dim>Bendigo - Orrcon Steel (Bm70)</Line>
            <Line $gap={14}><b>Race8</b><b>1300m</b><span><b>Age:</b>4G</span></Line>
            <Line><span><b>J:</b>J Winks</span><span><b>T:</b>D T O'Brien</span></Line>
            <ActionRow><Action label="Form Data" /></ActionRow>
          </RaceMain>
          <StatusBadge $bg="#f70f1a">DNP</StatusBadge>
        </RaceTop>
      </RaceCard>
    </Screen>
  );
}

const navItems = ['HOME', 'ABOUT', 'FEATURES', 'REVIEWS', 'SCREENS', 'DEMO', 'RACING', 'CONTACT'];
const slides = [
  { caption: 'Home', screen: <HomeScreen /> },
  { caption: 'Preferences', screen: <PreferencesScreen /> },
  { caption: 'Selections', screen: <SelectionsScreen /> },
  { caption: 'Results', screen: <ResultsScreen /> },
];

export default function App() {
  return (
    <Page>
      <GlobalStyle />
      <NavBar>
        {navItems.map(n => <NavLink key={n} $active={n === 'SCREENS'}>{n}</NavLink>)}
      </NavBar>
      <Rail>
        <RailItem $bg="#2f5590" $h={38}><FaFacebookF size={28} style={{ marginLeft: 8, marginTop: 9 }} /></RailItem>
        <RailItem $bg="#2ca8d6" $h={37}><FaTwitter size={23} /></RailItem>
        <RailItem $bg="#dc4a38" $h={38}><GooglePlus>g<small>+</small></GooglePlus></RailItem>
        <RailItem $bg="#798c8c" $h={39}>
          <svg width="23" height="16" viewBox="0 0 23 16">
            <rect x="0.5" y="0.5" width="22" height="15" fill="#f3f5f5" stroke="#c9d0d0" />
            <path d="M1 1 L11.5 10 L22 1" fill="none" stroke="#8a9696" strokeWidth="1.6" />
          </svg>
        </RailItem>
        <RailToggle />
      </Rail>
      <Stage>
        <ArrowButton $side="left" $faint><ChevronLeft size={36} strokeWidth={2.2} /></ArrowButton>
        {slides.map(s => (
          <Slide key={s.caption}>
            <Frame>{s.screen}</Frame>
            <Caption>{s.caption}</Caption>
          </Slide>
        ))}
        <ArrowButton $side="right"><ChevronRight size={34} strokeWidth={2.2} /></ArrowButton>
      </Stage>
      <TopButton><ChevronUp size={38} strokeWidth={2} /></TopButton>
    </Page>
  );
}
